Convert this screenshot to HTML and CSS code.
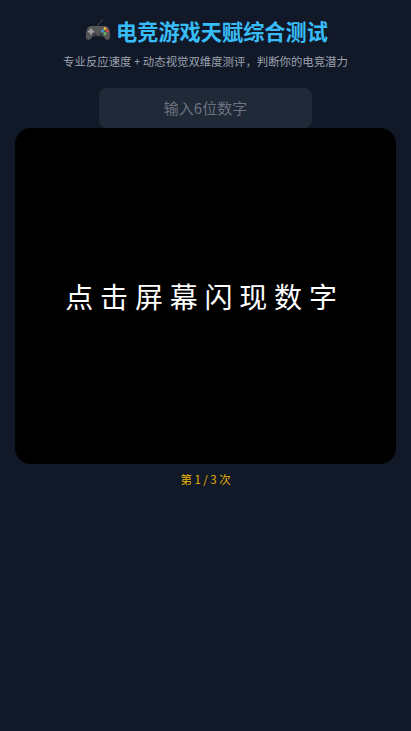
FILE: index.html
```html
<!DOCTYPE html>
<html lang="zh-CN">
<head>
    <meta charset="UTF-8">
    <meta name="viewport" content="width=device-width, initial-scale=1.0">
    <title>电竞游戏天赋综合测试</title>
    <link rel="stylesheet" href="styles.css">
</head>
<body>
    <div class="container">
        <h1 class="title">
            <svg class="pad-icon" viewBox="0 0 26 24" width="26" height="24">
                <path d="M13 8 C13 5 15 5 16 4 L18 1" fill="none" stroke="#454547" stroke-width="1"/>
                <path d="M6 8 H20 C23 8 24.500 11 25 15 C25.500 19 25 22 22.500 22 C20.500 22 19.500 19 17.500 18 H8.500 C6.500 19 5.500 22 3.500 22 C1 22 0.500 19 1 15 C1.500 11 3 8 6 8 Z" fill="#555557"/>
                <path d="M5 10.500 h2 v2 h2 v2 h-2 v2 h-2 v-2 h-2 v-2 h2 Z" fill="#a0a0a0"/>
                <circle cx="20" cy="10.500" r="1.500" fill="#f2b632"/>
                <circle cx="22.500" cy="13" r="1.500" fill="#e0443e"/>
                <circle cx="17.500" cy="13" r="1.500" fill="#3f9ad6"/>
                <circle cx="20" cy="15.500" r="1.500" fill="#5cb85c"/>
                <circle cx="10" cy="17" r="1.800" fill="#39393b"/>
                <circle cx="16" cy="17" r="1.800" fill="#39393b"/>
            </svg>
            <span>电竞游戏天赋综合测试</span>
        </h1>
        <p class="subtitle">专业反应速度 + 动态视觉双维度测评，判断你的电竞潜力</p>
        <input class="answer-input" type="text" placeholder="输入6位数字" disabled>
        <div class="flash-box">点击屏幕闪现数字</div>
        <p class="round-count">第 1 / 3 次</p>
    </div>
</body>
</html>
```

FILE: styles.css
```css
* {
    box-sizing: border-box;
}

body {
    margin: 0;
    min-height: 731px;
    background-color: #111827;
    font-family: "Noto Sans CJK SC", "Liberation Sans", sans-serif;
}

.container {
    display: flex;
    flex-direction: column;
    align-items: center;
    padding: 13px 15px 0;
}

.title {
    display: flex;
    align-items: center;
    justify-content: center;
    gap: 5px;
    height: 34px;
    margin: 0;
    padding-left: 2px;
    color: #38bdf8;
    font-size: 21.2px;
    font-weight: 700;
}

.pad-icon {
    flex: none;
}

.subtitle {
    margin: 5px 0 0;
    height: 18px;
    color: #9ca3af;
    font-size: 11.4px;
    line-height: 18px;
}

.answer-input {
    width: 213px;
    height: 40px;
    margin-top: 18px;
    padding: 0 0 2px;
    border: none;
    border-radius: 8px;
    background: #1f2937;
    color: #9ca3af;
    font-family: inherit;
    font-size: 15px;
    text-align: center;
}

.answer-input::placeholder {
    color: #6b7280;
    opacity: 1;
}

.flash-box {
    display: flex;
    align-items: center;
    justify-content: center;
    width: 381px;
    height: 336px;
    padding-right: 2px;
    border-radius: 16px;
    background: #000;
    color: #fff;
    font-size: 28px;
    letter-spacing: 6.800px;
}

.round-count {
    margin: 6px 0 0;
    color: #eab308;
    font-size: 11.4px;
    line-height: 18px;
}
```
